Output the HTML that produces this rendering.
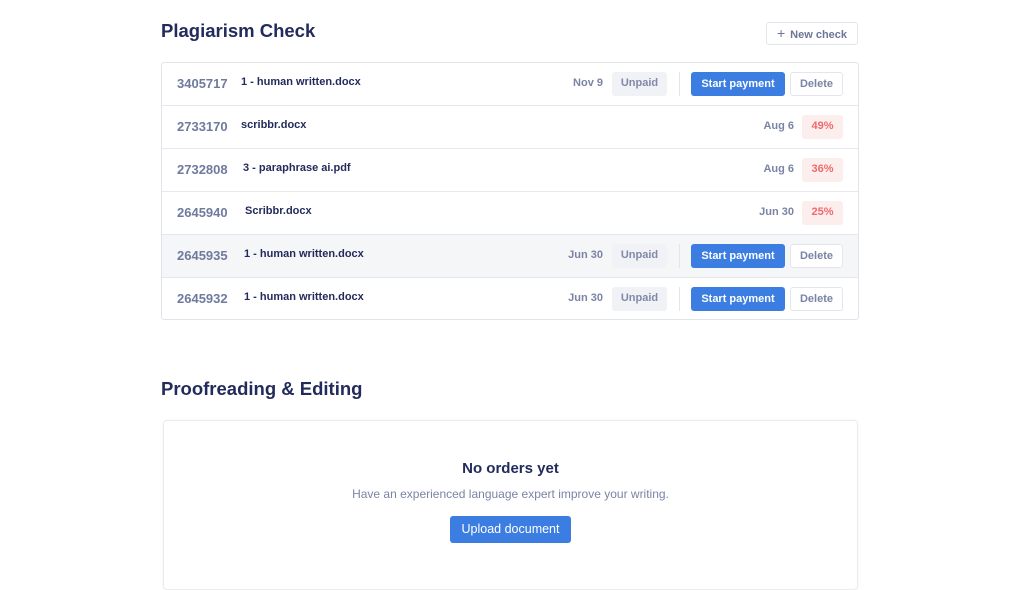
<!DOCTYPE html>
<html><head><meta charset="utf-8"><style>
*{box-sizing:border-box;margin:0;padding:0}
body{width:1024px;height:575px;overflow:hidden;background:#fff;font-family:"Liberation Sans",sans-serif;position:relative;color:#232b5c}
.abs{position:absolute}
h2{position:absolute;left:161px;font-size:18.5px;font-weight:bold;color:#232b5c}
.newbtn{left:766px;top:22px;width:92px;height:23px;border:1px solid #e3e6ee;border-radius:3px;font-size:11px;font-weight:bold;color:#6d7698;line-height:21px;text-align:center}
.tbl{left:161px;top:62px;width:698px;height:258px;border:1px solid #e1e4ea;border-radius:3px;overflow:hidden}
.row{position:relative;height:43px;border-bottom:1px solid #e6e8ee}
.row:last-child{border-bottom:none}
.row.g{background:#f5f6f8}
.id{position:absolute;left:15px;top:13px;font-size:13px;font-weight:bold;color:#6f7a9e}
.nm{position:absolute;top:13px;font-size:11px;font-weight:bold;color:#232b5c}
.dt{position:absolute;top:14px;font-size:11px;font-weight:bold;color:#7b84a5;text-align:right}
.unp{position:absolute;left:450px;top:9px;width:55px;height:24px;background:#f1f2f5;border-radius:3px;font-size:11px;font-weight:bold;color:#8189a8;text-align:center;line-height:22px}
.div{position:absolute;left:517px;top:9px;width:1px;height:24px;background:#e3e5eb}
.sp{position:absolute;left:529px;top:9px;width:94px;height:24px;background:#3b7de0;border-radius:3px;color:#fff;font-size:11px;font-weight:bold;text-align:center;line-height:24px}
.del{position:absolute;left:628px;top:9px;width:53px;height:24px;border:1px solid #e3e6ee;background:#fff;border-radius:3px;font-size:11px;font-weight:bold;color:#7b84a5;text-align:center;line-height:22px}
.pct{position:absolute;left:640px;top:9px;width:41px;height:24px;background:#fdeeee;border-radius:3px;font-size:11px;font-weight:bold;color:#ef6a6a;text-align:center;line-height:23px}
.card{left:163px;top:420px;width:695px;height:170px;border:1px solid #eaecf0;border-radius:4px;box-shadow:0 0 3px rgba(0,0,0,.05)}
</style></head><body>
<h2 style="top:20px">Plagiarism Check</h2>
<div class="abs newbtn"><span style="font-size:14px;font-weight:normal;margin-right:5px">+</span>New check</div>
<div class="abs tbl">
 <div class="row"><span class="id">3405717</span><span class="nm" style="left:79px">1 - human written.docx</span><span class="dt" style="right:255px">Nov 9</span><span class="unp">Unpaid</span><span class="div"></span><span class="sp">Start payment</span><span class="del">Delete</span></div>
 <div class="row"><span class="id">2733170</span><span class="nm" style="left:79px">scribbr.docx</span><span class="dt" style="right:64px">Aug 6</span><span class="pct">49%</span></div>
 <div class="row"><span class="id">2732808</span><span class="nm" style="left:81px">3 - paraphrase ai.pdf</span><span class="dt" style="right:64px">Aug 6</span><span class="pct">36%</span></div>
 <div class="row"><span class="id">2645940</span><span class="nm" style="left:83px">Scribbr.docx</span><span class="dt" style="right:64px">Jun 30</span><span class="pct">25%</span></div>
 <div class="row g"><span class="id">2645935</span><span class="nm" style="left:82px">1 - human written.docx</span><span class="dt" style="right:255px">Jun 30</span><span class="unp">Unpaid</span><span class="div"></span><span class="sp">Start payment</span><span class="del">Delete</span></div>
 <div class="row"><span class="id">2645932</span><span class="nm" style="left:82px">1 - human written.docx</span><span class="dt" style="right:255px">Jun 30</span><span class="unp">Unpaid</span><span class="div"></span><span class="sp">Start payment</span><span class="del">Delete</span></div>
</div>
<h2 style="top:378px">Proofreading &amp; Editing</h2>
<div class="abs card"></div>
<div class="abs" style="left:163px;width:695px;top:460px;text-align:center;font-size:15px;font-weight:bold;color:#232b5c">No orders yet</div>
<div class="abs" style="left:163px;width:695px;top:487px;text-align:center;font-size:12px;color:#7b84a5">Have an experienced language expert improve your writing.</div>
<div class="abs" style="left:450px;top:516px;width:121px;height:27px;background:#3b7de0;border-radius:3px;color:#fff;font-size:12.5px;text-align:center;line-height:27px">Upload document</div>
</body></html>
